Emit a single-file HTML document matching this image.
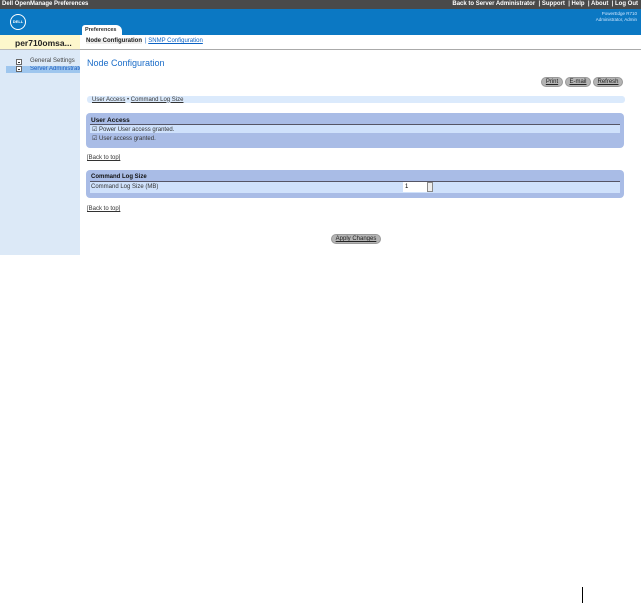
<!DOCTYPE html>
<html><head><style>
*{margin:0;padding:0;box-sizing:border-box}
body{width:641px;height:603px;background:#fff;font-family:"Liberation Sans",sans-serif;position:relative;overflow:hidden}
.a{position:absolute}
.t{font-size:6px;color:#333}
.u{text-decoration:underline}
.btn{position:absolute;height:10px;border-radius:5px;background:#b4b4b4;border:1px solid #999;font-size:6px;text-align:center;line-height:8px;color:#222;text-decoration:underline}
.bx{position:absolute;width:6px;height:6px;border:1px solid #666;background:#fff}
.bx:after{content:"";position:absolute;left:1px;top:1.5px;width:2px;height:1px;background:#333}
</style></head><body>
<div class="a" style="left:0;top:0;width:641px;height:9px;background:#4a4a4a"></div>
<div class="a" style="left:2px;top:1px;font-size:6px;font-weight:bold;color:#fff">Dell OpenManage Preferences</div>
<div class="a" style="right:3px;top:1px;font-size:6px;font-weight:bold;color:#fff">Back to Server Administrator &nbsp;| Support &nbsp;| Help &nbsp;| About &nbsp;| Log Out</div>
<div class="a" style="left:0;top:9px;width:641px;height:26px;background:#0b78c3"></div>
<div class="a" style="left:10px;top:14px;width:16px;height:16px;border:1.5px solid #fff;border-radius:50%;color:#fff;font-size:4px;font-weight:bold;text-align:center;line-height:13px">DELL</div>
<div class="a" style="right:4px;top:11px;font-size:4.5px;color:#cfe6ff;text-align:right;line-height:6px">PowerEdge R710<br>Administrator, Admin</div>
<div class="a" style="left:82px;top:25px;width:40px;height:10px;background:#fff;border-radius:3px 6px 0 0;font-size:5.5px;font-weight:bold;padding:2px 3px;color:#333">Preferences</div>
<div class="a" style="left:0;top:35px;width:80px;height:220px;background:#dce9f7"></div>
<div class="a" style="left:0;top:35px;width:80px;height:15px;background:#fdf7cc;border-bottom:1px solid #bbb;font-size:8.5px;font-weight:bold;color:#222;padding:3px 0 0 15px">per710omsa...</div>
<div class="a" style="left:80px;top:49px;width:561px;height:1px;background:#aaa"></div>
<div class="a t" style="left:86px;top:38px;font-weight:bold;color:#222;background:#eee">Node Configuration</div>
<div class="a t" style="left:145px;top:38px;color:#0b62c4">| <span class="u">SNMP Configuration</span></div>
<div class="bx" style="left:16px;top:59px"></div>
<div class="a t" style="left:30px;top:58px;color:#444">General Settings</div>
<div class="a" style="left:6px;top:66px;width:74px;height:7px;background:#9ec6ee"></div>
<div class="bx" style="left:16px;top:66px"></div>
<div class="a t" style="left:30px;top:66px;color:#1a5cc0;white-space:nowrap;width:50px;overflow:hidden">Server Administrator</div>
<div class="a" style="left:87px;top:58px;font-size:9px;color:#1a6cc8">Node Configuration</div>
<div class="btn" style="left:541px;top:77px;width:22px">Print</div>
<div class="btn" style="left:565px;top:77px;width:26px">E-mail</div>
<div class="btn" style="left:593px;top:77px;width:30px">Refresh</div>
<div class="a" style="left:87px;top:96px;width:538px;height:7px;background:#dbeafc;border-radius:3px"></div>
<div class="a t" style="left:92px;top:96.5px"><span class="u">User Access</span> • <span class="u">Command Log Size</span></div>
<div class="a" style="left:86px;top:113px;width:538px;height:35px;background:#a9bce6;border-radius:4px"></div>
<div class="a" style="left:91px;top:117px;font-size:6.5px;font-weight:bold;color:#111">User Access</div>
<div class="a" style="left:90px;top:124px;width:530px;height:1px;background:#556"></div>
<div class="a" style="left:90px;top:125px;width:530px;height:8px;background:#cfe1fb"></div>
<div class="a t" style="left:92px;top:126px">☑ Power User access granted.</div>
<div class="a t" style="left:92px;top:135px">☑ User access granted.</div>
<div class="a t" style="left:87px;top:155px"><span class="u">[Back to top]</span></div>
<div class="a" style="left:86px;top:170px;width:538px;height:28px;background:#a9bce6;border-radius:4px"></div>
<div class="a" style="left:91px;top:174px;font-size:6px;font-weight:bold;color:#111">Command Log Size</div>
<div class="a" style="left:90px;top:181px;width:530px;height:1px;background:#556"></div>
<div class="a" style="left:90px;top:182px;width:530px;height:11px;background:#cfe1fb"></div>
<div class="a t" style="left:91px;top:184px">Command Log Size (MB)</div>
<div class="a" style="left:403px;top:182px;width:24px;height:10px;background:#fff;font-size:6px;padding:2px 2px">1</div>
<div class="a" style="left:427px;top:182px;width:6px;height:10px;background:#eee;border:1px solid #888"></div>
<div class="a t" style="left:87px;top:206px"><span class="u">[Back to top]</span></div>
<div class="btn" style="left:331px;top:234px;width:50px">Apply Changes</div>
<div class="a" style="left:582px;top:587px;width:1px;height:16px;background:#000"></div>
</body></html>
